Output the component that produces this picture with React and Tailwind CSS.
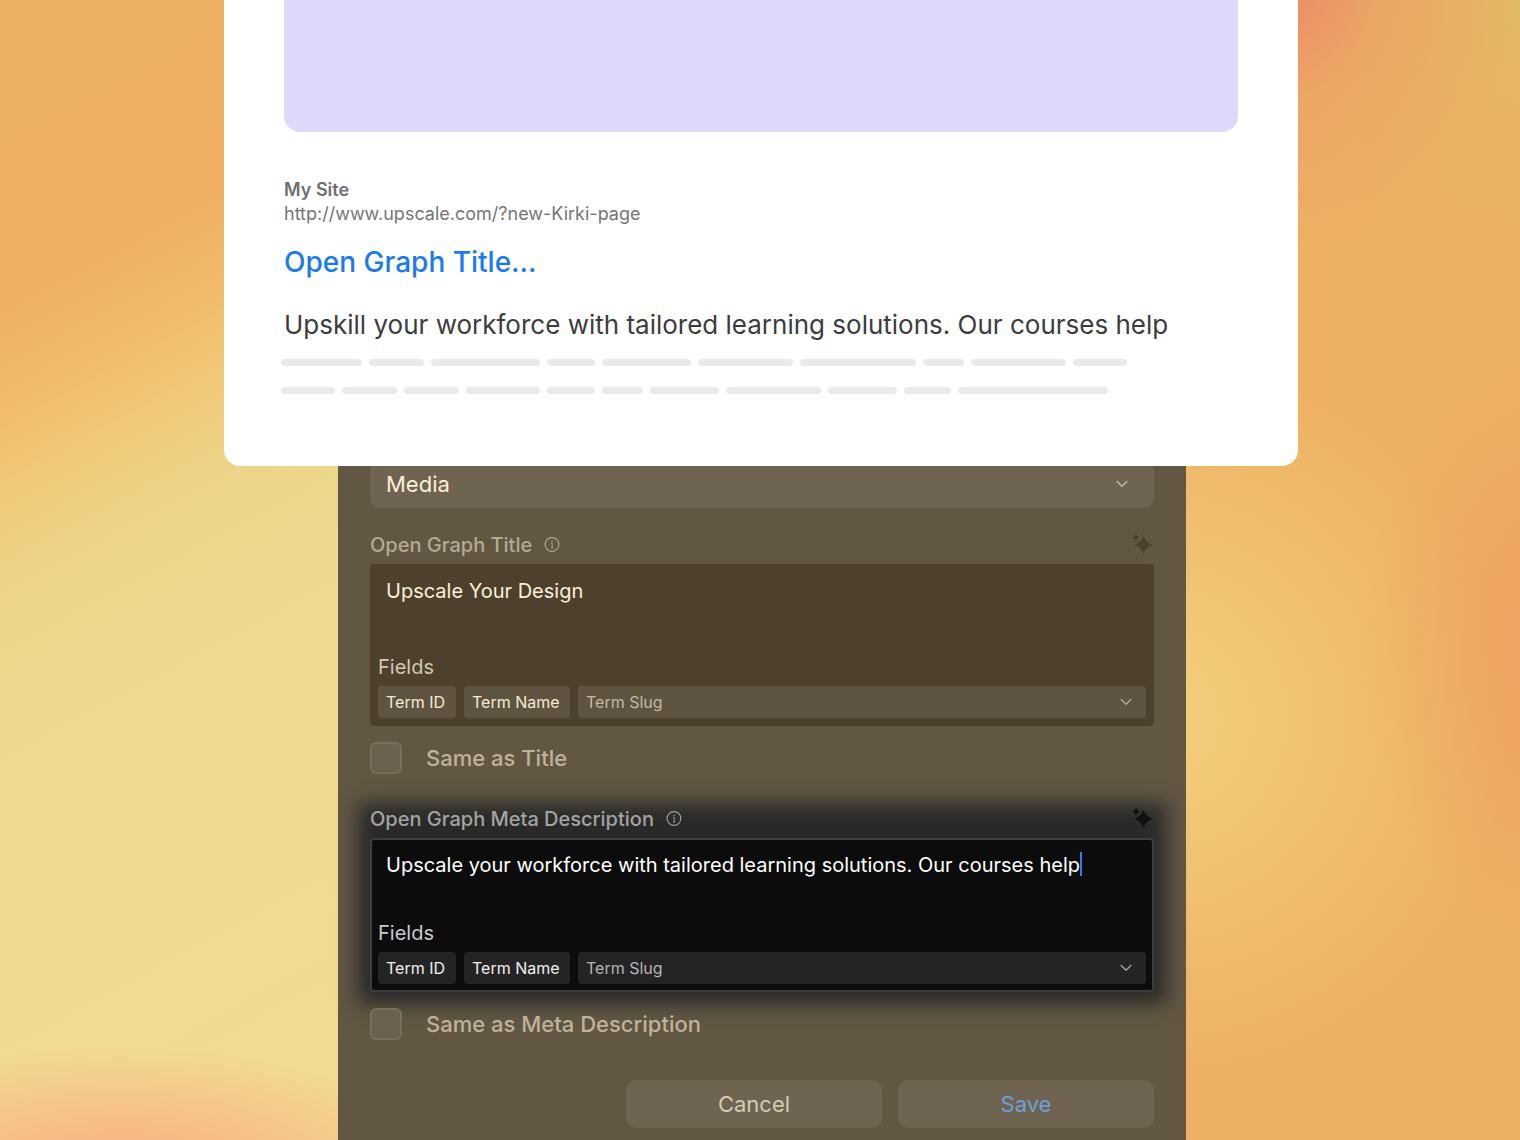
import React, { useState } from "react";
import clsx from "clsx";

const skeletonRows = [
  [81, 55, 109, 48, 89, 95, 116, 41, 95, 54],
  [54, 55, 55, 74, 48, 41, 69, 95, 69, 47, 150],
];

const backdrop = {
  background: [
    "radial-gradient(ellipse 330px 140px at 8% 104%, #fb9f72 0%, #f9ab7eb3 35%, #f6c88800 100%)",
    "radial-gradient(ellipse 240px 280px at 84% -2%, #ea8866 0%, #ec9c6680 45%, #edae6300 100%)",
    "radial-gradient(ellipse 260px 300px at 101% 0%, #e0b966 0%, #e6b56480 50%, #edae6300 100%)",
    "radial-gradient(ellipse 220px 300px at 104% 57%, #ee9a60cc 0%, #eda66100 100%)",
    "radial-gradient(ellipse 360px 360px at 76% 63%, #f2d07e 0%, #f0c874cc 42%, #edb06400 100%)",
    "linear-gradient(90deg, transparent 55%, #eeb064 78%)",
    "linear-gradient(152deg, #ebb063 0%, #f0ae62 15%, #f0bb6c 21%, #f0c877 25%, #edd387 30%, #ecd98d 36%, #efda92 46%, #f2da90 62%, #f3d48c 100%)",
  ].join(", "),
};

function ChevronIcon({ className }) {
  return (
    <svg viewBox="0 0 12 8" fill="none" stroke="currentColor" strokeWidth="1.4" strokeLinecap="round" strokeLinejoin="round" className={clsx("pointer-events-none absolute h-2 w-3", className)} aria-hidden="true">
      <path d="M1.2 1.5 6 6.3l4.8-4.8" />
    </svg>
  );
}

function InfoIcon() {
  return (
    <svg viewBox="0 0 16 16" fill="none" stroke="currentColor" className="h-4 w-4" aria-hidden="true">
      <circle cx="8" cy="7.5" r="6.9" strokeWidth="1.1" />
      <path d="M7 6.3h1.200v4.400M7 10.900h2.400" strokeWidth="0.900" />
      <circle cx="8" cy="4.300" r="0.700" fill="currentColor" stroke="none" />
    </svg>
  );
}

function SparkleIcon() {
  return (
    <svg viewBox="0 0 24 24" fill="currentColor" className="h-6 w-6" aria-hidden="true">
      <path d="M13.500 2.500Q15.400 9.800 23 11.700Q15.400 13.600 13.500 21Q11.600 13.600 4 11.700Q11.600 9.800 13.500 2.500Z" />
      <path d="M6 0.500Q6.900 3.600 10 4.500Q6.900 5.400 6 8.500Q5.100 5.400 2 4.500Q5.100 3.600 6 0.500Z" />
    </svg>
  );
}

function SharePreview() {
  return (
    <section className="relative z-10 rounded-b-2xl bg-white px-[60px] pb-[72px]">
      <div className="h-[132px] rounded-b-2xl bg-[#ddd9fb]" />
      <p className="mt-[46px] text-lg leading-6 font-semibold text-[#6f6f6f]">My Site</p>
      <p className="text-lg leading-6 text-[#757575]">http://www.upscale.com/?new-Kirki-page</p>
      <h2 className="mt-5 text-[28px] leading-8 font-medium text-[#1a7af0]">
        <a href="#preview">Open Graph Title...</a>
      </h2>
      <p className="mt-[31px] text-[26px] leading-8 whitespace-nowrap text-[#3c3c3e]">
        Upskill your workforce with tailored learning solutions. Our courses help
      </p>
      <div className="mt-[18px] -ml-[3px] flex flex-col gap-[21px]">
        {skeletonRows.map((row, i) => (
          <div key={i} className="flex gap-[7px]">
            {row.map((width, j) => (
              <span key={j} className="h-[7px] rounded-full bg-[#eaeaea]" style={{ width }} />
            ))}
          </div>
        ))}
      </div>
    </section>
  );
}

function MetaField({ id, label, value, onChange, active }) {
  const chip = clsx("h-8 rounded px-2 text-left text-base", active ? "bg-[#242424] text-[#f0f0f0]" : "bg-[#5f5341] text-[#f6ead3]");

  return (
    <div className={clsx("relative", active ? "text-[#a3a3a3]" : "text-[#b5a993]")}>
      {active && <div className="absolute -inset-x-3 -top-1 -bottom-3 bg-[#292929] blur-[10px]" />}
      <div className="relative">
        <div className="flex h-6 items-center">
          <label htmlFor={id} className="text-xl leading-6 font-medium">{label}</label>
          <span className="ml-3"><InfoIcon /></span>
          <button type="button" aria-label={`Generate ${label}`} className={clsx("ml-auto", active ? "text-[#101010]" : "text-[#4d412d]")}>
            <SparkleIcon />
          </button>
        </div>
        <div className={clsx("relative mt-[7px] rounded", active ? "border-2 border-[#3d3d3d] bg-[#0c0c0c] p-1.5" : "bg-[#4d412d] p-2")}>
          <textarea
            id={id}
            value={value}
            onChange={(e) => onChange(e.target.value)}
            spellCheck={false}
            className={clsx("block w-full resize-none overflow-hidden bg-transparent px-2 pt-[7px] text-xl leading-6 outline-none", active ? "h-[75px] text-white" : "h-[83px] text-[#fbefd9]")}
          />
          {active && <span className="absolute top-3 left-[708px] h-6 w-0.5 bg-[#2f7bf0]" />}
          <p className={clsx("text-xl leading-6", active ? "text-[#c9c9c9]" : "text-[#d3c7b0]")}>Fields</p>
          <div className="mt-[7px] flex gap-2">
            <button type="button" className={clsx(chip, "w-[78px]")}>Term ID</button>
            <button type="button" className={clsx(chip, "w-[106px]")}>Term Name</button>
            <div className="relative flex-1">
              <select aria-label="Field" className={clsx("h-8 w-full appearance-none rounded px-2 text-base outline-none", active ? "bg-[#242424] text-[#b4b4b4]" : "bg-[#5f5341] text-[#c4b8a1]")}>
                <option>Term Slug</option>
              </select>
              <ChevronIcon className="top-3 right-3.5" />
            </div>
          </div>
        </div>
      </div>
    </div>
  );
}

function SameAs({ id, label }) {
  return (
    <div className="relative mt-4 flex items-center gap-6">
      <input id={id} type="checkbox" className="h-8 w-8 appearance-none rounded-md border-2 border-[#796e5b] bg-[#6c614e]" />
      <label htmlFor={id} className="text-[22px] leading-8 font-medium text-[#beb29c]">{label}</label>
    </div>
  );
}

export default function App() {
  const [title, setTitle] = useState("Upscale Your Design");
  const [description, setDescription] = useState(
    "Upscale your workforce with tailored learning solutions. Our courses help"
  );

  return (
    <div className="flex min-h-screen flex-col overflow-hidden font-['Inter',sans-serif]" style={backdrop}>
      <main className="mx-auto flex w-full max-w-[1076px] flex-1 flex-col pl-0.5">
        <SharePreview />
        <form className="-mt-[38px] mr-[112px] ml-[114px] flex-1 bg-[#625743] px-8 pt-8 pb-3" onSubmit={(e) => e.preventDefault()}>
          <div className="relative">
            <select aria-label="Open Graph image source" className="h-12 w-full appearance-none rounded-[10px] bg-[#6e6451] px-4 text-[22px] text-[#fbefd9] outline-none">
              <option>Media</option>
            </select>
            <ChevronIcon className="top-5 right-[26px] text-[#c4b8a1]" />
          </div>
          <div className="mt-[25px]">
            <MetaField id="og-title" label="Open Graph Title" value={title} onChange={setTitle} />
          </div>
          <SameAs id="same-title" label="Same as Title" />
          <div className="mt-[33px]">
            <MetaField id="og-description" label="Open Graph Meta Description" value={description} onChange={setDescription} active />
          </div>
          <SameAs id="same-description" label="Same as Meta Description" />
          <div className="mt-10 flex justify-end gap-4">
            <button type="button" className="h-12 w-64 rounded-[10px] bg-[#6e6451] text-[22px] text-[#d6cab4]">Cancel</button>
            <button type="submit" className="h-12 w-64 rounded-[10px] bg-[#6e6451] text-[22px] text-[#6d9fda]">Save</button>
          </div>
        </form>
      </main>
    </div>
  );
}
